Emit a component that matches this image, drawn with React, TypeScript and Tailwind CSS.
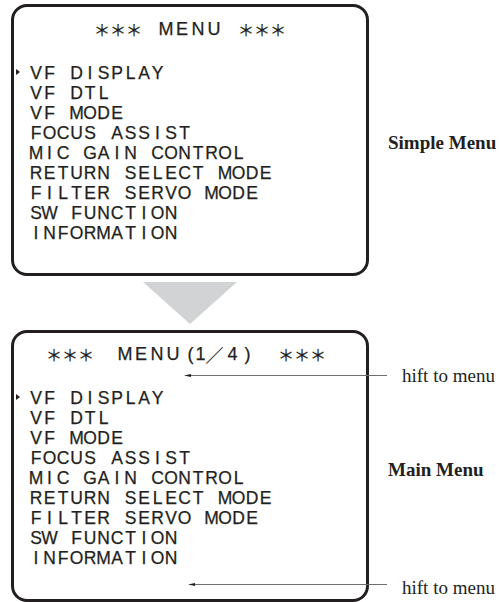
import React from "react";

const ITEMS = [
  "VF DISPLAY",
  "VF DTL",
  "VF MODE",
  "FOCUS ASSIST",
  "MIC GAIN CONTROL",
  "RETURN SELECT MODE",
  "FILTER SERVO MODE",
  "SW FUNCTION",
  "INFORMATION",
];

function ItemCells({ text }: { text: string }) {
  return (
    <div className="flex">
      {Array.from(text).map((c, i) => (
        <span key={i} className="flex w-[13.5px] shrink-0 justify-center">
          {c === " " ? "\u00a0" : c}
        </span>
      ))}
    </div>
  );
}

function TitleCells({ text }: { text: string }) {
  return (
    <div className="flex">
      {Array.from(text).map((c, i) => (
        <span key={i} className="flex w-[16px] shrink-0 justify-center">
          {c === " " ? "\u00a0" : c}
        </span>
      ))}
    </div>
  );
}

function Stars() {
  return (
    <div className="flex">
      {[0, 1, 2].map((i) => (
        <span
          key={i}
          className="flex w-[16px] shrink-0 justify-center font-['Noto_Sans_CJK_JP',sans-serif] text-[16px] font-normal text-[#231f20]"
        >
          ＊
        </span>
      ))}
    </div>
  );
}

function Rows() {
  return (
    <div className="mt-[24.8px] flex flex-col">
      {ITEMS.map((t, i) => (
        <div key={t} className="flex h-[20px] items-center">
          <div className="flex w-[15.3px] shrink-0 items-center">
            {i === 0 && (
              <svg width="4" height="6" viewBox="0 0 4 6" className="ml-[2px] -mt-[2px]">
                <polygon points="0,0 4,3 0,6" fill="#231f20" />
              </svg>
            )}
          </div>
          <ItemCells text={t} />
        </div>
      ))}
    </div>
  );
}

function Box({ children }: { children: React.ReactNode }) {
  return (
    <div className="relative h-[272px] w-[358px] shrink-0 rounded-[16px] border-[3px] border-[#231f20] font-['Liberation_Sans',Arial,sans-serif] text-[17.5px] leading-[20px] [-webkit-text-stroke:0.25px_#231f20]">
      {children}
    </div>
  );
}

function Arrowhead() {
  return (
    <svg width="7" height="3" viewBox="0 0 7 3" className="shrink-0">
      <polygon points="0,1.5 7,0 7,3" fill="#231f20" />
    </svg>
  );
}

export default function App() {
  return (
    <div className="relative h-[602px] w-[500px] overflow-hidden bg-white pt-[4px] text-[#231f20]">
      {/* Simple menu */}
      <div className="flex items-start pl-[11px]">
        <Box>
          <div className="mt-[11.6px] flex h-[20px] items-center justify-center text-[18px]">
            <Stars />
            <TitleCells text=" MENU " />
            <Stars />
          </div>
          <Rows />
        </Box>
        <div className="ml-[19px] mt-[127.6px] whitespace-nowrap font-['Liberation_Serif','Times_New_Roman',serif] text-[19px] font-bold leading-[22px]">
          Simple Menu
        </div>
      </div>

      {/* Down arrow */}
      <div className="ml-[11px] flex w-[358px] justify-center py-[6px]">
        <svg width="94" height="42" viewBox="0 0 94 42">
          <polygon points="0,0 94,0 47,42" fill="#d1d3d4" />
        </svg>
      </div>

      {/* Main menu */}
      <div className="relative flex items-start pl-[11px]">
        <Box>
          <div className="mt-[10.6px] flex h-[20px] items-center pl-[32px] text-[18px]">
            <Stars />
            <div className="ml-[23px]">
              <TitleCells text="MENU" />
            </div>
            <span className="ml-[4.5px] flex w-[10px] shrink-0 justify-center">(</span>
            <span className="flex w-[10px] shrink-0 justify-center">1</span>
            <span className="flex w-[18px] shrink-0 justify-center font-['Noto_Sans_CJK_JP',sans-serif] font-light">
              ／
            </span>
            <span className="flex w-[18px] shrink-0 justify-center">4</span>
            <span className="flex w-[12px] shrink-0 justify-center">)</span>
            <div className="ml-[24.5px]">
              <Stars />
            </div>
          </div>
          <Rows />
        </Box>
        <div className="ml-[19px] mt-[128.9px] whitespace-nowrap font-['Liberation_Serif','Times_New_Roman',serif] text-[19px] font-bold leading-[22px]">
          Main Menu
        </div>

        {/* shift annotations */}
        <div className="absolute left-[184px] top-[34.9px] flex items-start">
          <div className="mt-[9.3px] flex h-[3px] w-[203px] items-center">
            <Arrowhead />
            <div className="h-px flex-1 bg-[#6d6e70]" />
          </div>
          <div className="ml-[15px] whitespace-nowrap font-['Liberation_Serif','Times_New_Roman',serif] text-[19px] leading-[22px]">
            hift to menu
          </div>
        </div>
        <div className="absolute left-[188px] top-[246.6px] flex items-start">
          <div className="mt-[6.2px] flex h-[3px] w-[199px] items-center">
            <Arrowhead />
            <div className="h-px flex-1 bg-[#6d6e70]" />
          </div>
          <div className="ml-[15px] whitespace-nowrap font-['Liberation_Serif','Times_New_Roman',serif] text-[19px] leading-[22px]">
            hift to menu
          </div>
        </div>
      </div>
    </div>
  );
}
